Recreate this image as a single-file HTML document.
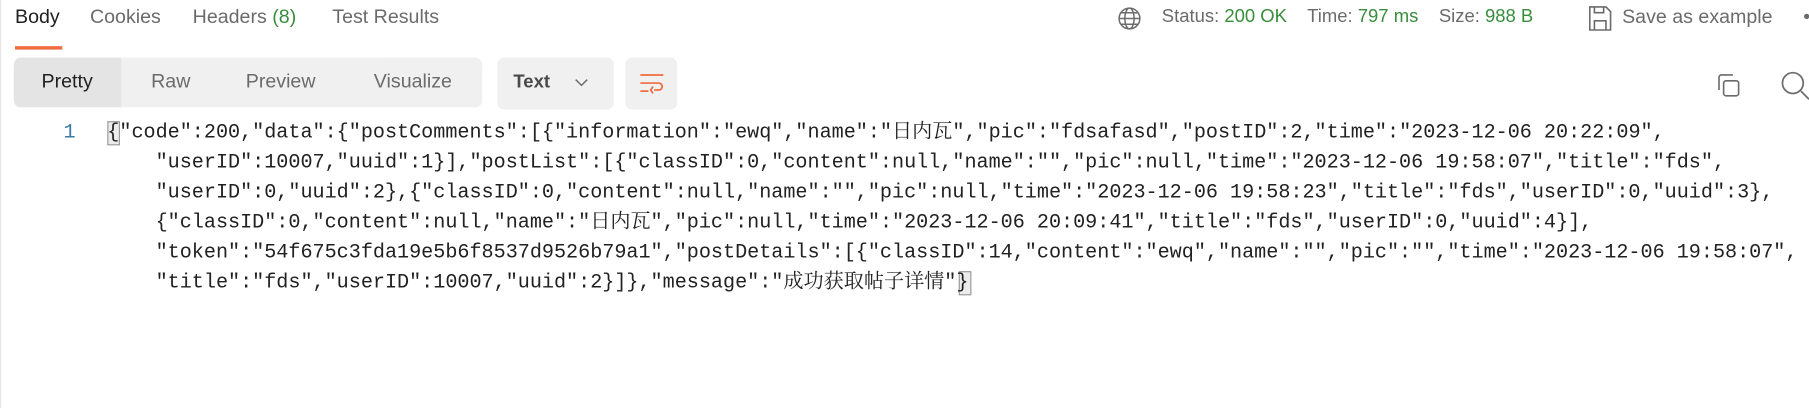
<!DOCTYPE html>
<html><head><meta charset="utf-8"><style>
*{margin:0;padding:0;box-sizing:border-box}
html,body{width:1809px;height:408px;overflow:hidden;background:#fff}
#w{width:1568px;height:354px;overflow:hidden;transform:scale(1.15370);transform-origin:0 0;font-family:"Liberation Sans",sans-serif;position:relative;color:#212121}
.a{position:absolute;white-space:nowrap}
.tab{font-size:17px;color:#6b6b6b;top:5px}
.g{color:#388e3c}
.m{color:#6b6b6b}
.code{position:absolute;left:93px;top:102px;font-family:"Liberation Mono","Noto Serif CJK SC",monospace;font-size:17.45px;color:#212121}
.code div{height:26px;line-height:26px;white-space:pre;overflow:visible}
.c{font-family:"Noto Serif CJK SC","Noto Sans CJK SC",serif;line-height:0}
</style></head><body><div id="w">
<div style="position:absolute;left:0;top:0;width:1px;height:354px;background:#e6e6e6"></div>
<div class="a tab" style="left:13px;color:#212121">Body</div>
<div style="position:absolute;left:13px;top:40px;width:41px;height:3px;background:#ef6c3f"></div>
<div class="a tab" style="left:78px">Cookies</div>
<div class="a tab" style="left:167px">Headers <span class="g">(8)</span></div>
<div class="a tab" style="left:288px">Test Results</div>

<svg class="a" style="left:968px;top:5px" width="22" height="22" viewBox="0 0 22 22" fill="none" stroke="#6b6b6b" stroke-width="1.3"><circle cx="11" cy="11" r="9"/><ellipse cx="11" cy="11" rx="4" ry="9"/><path d="M2 11h18M4 6h14M4 16h14"/></svg>
<div class="a" style="left:1007px;top:6px;font-size:16px"><span class="m">Status:</span> <span class="g">200 OK</span>&nbsp;&nbsp;&nbsp; <span class="m">Time:</span> <span class="g">797 ms</span>&nbsp;&nbsp;&nbsp; <span class="m">Size:</span> <span class="g">988 B</span></div>
<svg class="a" style="left:1376px;top:4px" width="22" height="24" viewBox="0 0 22 24" fill="none" stroke="#6b6b6b" stroke-width="1.4"><path d="M2 2h14l4 4v16H2z"/><path d="M6 2v5h8V2M6 22v-8h10v8"/></svg>
<div class="a" style="left:1406px;top:5px;font-size:17px;color:#6b6b6b">Save as example</div>
<div class="a" style="left:1563px;top:5px;font-size:17px;color:#6b6b6b">•</div>

<div style="position:absolute;left:12px;top:50px;width:406px;height:43px;background:#f0f0f0;border-radius:6px"></div>
<div style="position:absolute;left:12px;top:50px;width:93px;height:43px;background:#e4e4e4;border-radius:6px 0 0 6px"></div>
<div class="a" style="left:36px;top:61px;font-size:17px;color:#212121">Pretty</div>
<div class="a" style="left:131px;top:61px;font-size:17px;color:#6b6b6b">Raw</div>
<div class="a" style="left:213px;top:61px;font-size:17px;color:#6b6b6b">Preview</div>
<div class="a" style="left:324px;top:61px;font-size:17px;color:#6b6b6b">Visualize</div>

<div style="position:absolute;left:431px;top:50px;width:101px;height:45px;background:#f0f0f0;border-radius:6px"></div>
<div class="a" style="left:445px;top:63px;font-size:16px;font-weight:bold;color:#4a4a4a">Text</div>
<svg class="a" style="left:497px;top:67px" width="14" height="10" viewBox="0 0 14 10" fill="none" stroke="#6b6b6b" stroke-width="1.3"><path d="M2 2l5 5 5-5"/></svg>
<div style="position:absolute;left:542px;top:50px;width:45px;height:45px;background:#f0f0f0;border-radius:6px"></div>
<svg class="a" style="left:553px;top:61px" width="24" height="22" viewBox="0 0 24 22" fill="none" stroke="#ef6c3f" stroke-width="1.5"><path d="M2 4h20M2 11h16a3 3 0 0 1 0 6h-4M13 14l-2 3 2 3M2 18h7"/></svg>

<svg class="a" style="left:1486px;top:62px" width="24" height="24" viewBox="0 0 24 24" fill="none" stroke="#6b6b6b" stroke-width="1.4"><path d="M4 16V5a2 2 0 0 1 2-2h10"/><rect x="8" y="8" width="13" height="13" rx="2"/></svg>
<svg class="a" style="left:1542px;top:60px" width="28" height="28" viewBox="0 0 28 28" fill="none" stroke="#6b6b6b" stroke-width="1.5"><circle cx="12" cy="12" r="9"/><path d="M19 19l7 7"/></svg>

<div class="a" style="left:55px;top:102px;font-family:'Liberation Mono',monospace;font-size:17.5px;line-height:26px;color:#3a7ca5">1</div>
<div style="position:absolute;left:93px;top:105px;width:11px;height:21px;background:#ececec;border:1px solid #9a9a9a"></div>
<div style="position:absolute;left:831px;top:235px;width:11px;height:21px;background:#ececec;border:1px solid #9a9a9a"></div>
<div class="code">
<div>{"code":200,"data":{"postComments":[{"information":"ewq","name":"<span class="c">日内瓦</span>","pic":"fdsafasd","postID":2,"time":"2023-12-06 20:22:09",</div>
<div>    "userID":10007,"uuid":1}],"postList":[{"classID":0,"content":null,"name":"","pic":null,"time":"2023-12-06 19:58:07","title":"fds",</div>
<div>    "userID":0,"uuid":2},{"classID":0,"content":null,"name":"","pic":null,"time":"2023-12-06 19:58:23","title":"fds","userID":0,"uuid":3},</div>
<div>    {"classID":0,"content":null,"name":"<span class="c">日内瓦</span>","pic":null,"time":"2023-12-06 20:09:41","title":"fds","userID":0,"uuid":4}],</div>
<div>    "token":"54f675c3fda19e5b6f8537d9526b79a1","postDetails":[{"classID":14,"content":"ewq","name":"","pic":"","time":"2023-12-06 19:58:07",</div>
<div>    "title":"fds","userID":10007,"uuid":2}]},"message":"<span class="c">成功获取帖子详情</span>"}</div>
</div>
</div></body></html>
